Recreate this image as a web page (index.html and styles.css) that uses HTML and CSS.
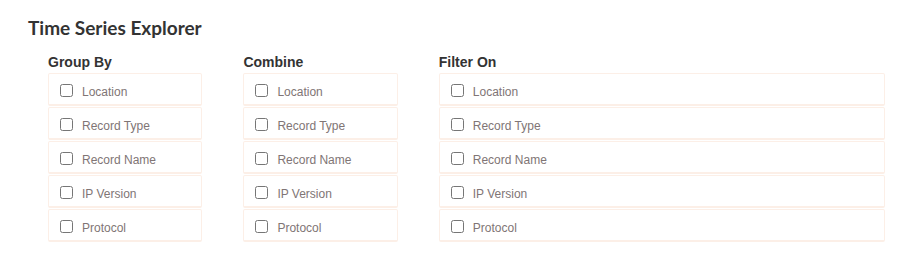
FILE: index.html
```html
<!DOCTYPE html>
<html lang="en">
<head>
  <meta charset="UTF-8" />
  <title>Time Series Explorer</title>
  <link rel="stylesheet" href="styles.css">
</head>
<body>

  <div class="explorer">
    <h2>Time Series Explorer</h2>

    <div class="columns">
      <!-- Group By -->
      <div class="column">
        <h4>Group By</h4>
        <label class="option"><input type="checkbox"><span>Location</span></label>
        <label class="option"><input type="checkbox"><span>Record Type</span></label>
        <label class="option"><input type="checkbox"><span>Record Name</span></label>
        <label class="option"><input type="checkbox"><span>IP Version</span></label>
        <label class="option"><input type="checkbox"><span>Protocol</span></label>
      </div>

      <!-- Combine -->
      <div class="column">
        <h4>Combine</h4>
        <label class="option"><input type="checkbox"><span>Location</span></label>
        <label class="option"><input type="checkbox"><span>Record Type</span></label>
        <label class="option"><input type="checkbox"><span>Record Name</span></label>
        <label class="option"><input type="checkbox"><span>IP Version</span></label>
        <label class="option"><input type="checkbox"><span>Protocol</span></label>
      </div>

      <!-- Filter On -->
      <div class="column wide">
        <h4>Filter On</h4>
        <label class="option"><input type="checkbox"><span>Location</span></label>
        <label class="option"><input type="checkbox"><span>Record Type</span></label>
        <label class="option"><input type="checkbox"><span>Record Name</span></label>
        <label class="option"><input type="checkbox"><span>IP Version</span></label>
        <label class="option"><input type="checkbox"><span>Protocol</span></label>
      </div>
    </div>
  </div>

</body>
</html>
```

FILE: styles.css
```css
body {
  margin: 0;
  background: #fff;
  font-family: "Liberation Sans", Arial, sans-serif;
}

.explorer {
  padding: 16px 20px 0 28px;
}

h2 {
  font-family: "Lato", "Open Sans", sans-serif;
  font-weight: 700;
  font-size: 19px;
  color: #333;
  margin: 0 0 15px;
}

.columns {
  display: flex;
  gap: 41px;
  padding-left: 20px;
}

.column {
  width: 155px;
}

.column.wide {
  width: 448px;
}

h4 {
  font-size: 14px;
  font-weight: bold;
  color: #333;
  margin: 0 0 3px;
}

.option {
  display: flex;
  align-items: center;
  height: 24px;
  padding: 6px 8px 0;
  margin-bottom: 1px;
  border: 1px solid #fcefe7;
  border-bottom-width: 2px;
  border-radius: 2px;
  font-size: 12px;
  color: #807575;
}

.option input {
  margin: 0 0 3px 3px;
  width: 13px;
  height: 13px;
}

.option span {
  margin-left: 9px;
}
```
